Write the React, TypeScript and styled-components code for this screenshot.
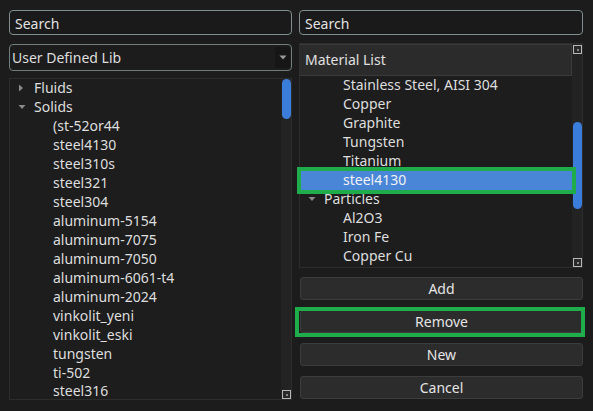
import React from "react";
import styled, { createGlobalStyle } from "styled-components";

const Global = createGlobalStyle`
  html, body { margin: 0; padding: 0; background: #1c1c1c; }
  body { font-family: "Noto Sans", "DejaVu Sans", sans-serif; color: #dedede; }
`;

const Page = styled.div`
  display: grid;
  grid-template-columns: 283px 284px;
  column-gap: 7px;
  padding: 10px 0 0 9px;
  width: 593px;
  height: 411px;
  box-sizing: border-box;
`;

const Column = styled.div`
  display: flex;
  flex-direction: column;
`;

const SearchBox = styled.div`
  height: 25px;
  box-sizing: border-box;
  border: 1.5px solid #7f8f8f;
  border-radius: 4px;
  background: #1a1a1a;
  font-size: 14px;
  line-height: 25px;
  padding-left: 5px;
  color: #e2e2e2;
`;

const Combo = styled.div`
  margin-top: 9px;
  height: 27px;
  box-sizing: border-box;
  border: 1.5px solid #6f7f7d;
  border-radius: 4px;
  background: #1c1c1c;
  display: flex;
  align-items: center;
  font-size: 14px;
  padding-left: 2px;
`;

const ComboText = styled.span`
  flex: 1;
`;

const ComboArrow = styled.div`
  width: 15px;
  align-self: stretch;
  margin: 2px 1px 2px 0;
  background: #161616;
  display: flex;
  align-items: center;
  justify-content: center;
`;

const TreeFrame = styled.div<{ $top: number; $h: number }>`
  margin-top: ${(p) => p.$top}px;
  height: ${(p) => p.$h}px;
  box-sizing: border-box;
  border: 1px solid #2d2d2d;
  background: #1d1d1d;
  display: flex;
`;

const TreeBody = styled.div`
  flex: 1;
  display: flex;
  flex-direction: column;
`;

const Header = styled.div`
  height: 32px;
  box-sizing: border-box;
  background: #2b2b2b;
  border: 1px solid #3a3a3a;
  border-left: none;
  font-size: 14px;
  line-height: 30px;
  padding-left: 5px;
  color: #e0e0e0;
`;

const Rows = styled.div`
  display: flex;
  flex-direction: column;
`;

const Row = styled.div<{ $level: number; $selected?: boolean }>`
  position: relative;
  height: 18.95px;
  line-height: 18px;
  font-size: 14px;
  display: flex;
  align-items: center;
  padding-left: ${(p) => (p.$level === 0 ? 8 : 43)}px;
  background: ${(p) => (p.$selected ? "#4a86d8" : "transparent")};
  color: ${(p) => (p.$selected ? "#f2f2f2" : "#dedede")};
  white-space: nowrap;
`;

const Twisty = styled.span`
  width: 16px;
  display: inline-flex;
  align-items: center;
`;

const Label = styled.span``;

const Scroll = styled.div`
  width: 10px;
  background: #232323;
  position: relative;
`;

const Thumb = styled.div<{ $top: number; $h: number }>`
  position: absolute;
  left: 1px;
  width: 9px;
  top: ${(p) => p.$top}px;
  height: ${(p) => p.$h}px;
  border-radius: 5px;
  background: #3b7ddb;
`;

const Corner = styled.div<{ $top?: boolean }>`
  position: absolute;
  left: 1px;
  ${(p) => (p.$top ? "top: 1px;" : "bottom: 0px;")}
  width: 9px;
  height: 9px;
  box-sizing: border-box;
  border: 1.5px solid #b8b8b8;
  background: #2a2a2a;
  display: flex;
  align-items: center;
  justify-content: center;
  &::after {
    content: "";
    width: 2px;
    height: 2px;
    background: #888;
  }
`;

const Buttons = styled.div`
  margin-top: 9px;
  display: flex;
  flex-direction: column;
  gap: 10px;
  padding-left: 1px;
`;

const Button = styled.div`
  position: relative;
  height: 23px;
  box-sizing: border-box;
  border: 1px solid #3c3c3c;
  border-radius: 3px;
  background: #2c2c2c;
  display: flex;
  align-items: center;
  justify-content: center;
  font-size: 14px;
  color: #e4e4e4;
`;

const Highlight = styled.div<{ $l: number; $r: number; $t: number; $b: number }>`
  position: absolute;
  z-index: 2;
  left: ${(p) => p.$l}px;
  right: ${(p) => p.$r}px;
  top: ${(p) => p.$t}px;
  bottom: ${(p) => p.$b}px;
  border: 4px solid #1ead4a;
  pointer-events: none;
`;

const Right = () => (
  <svg width="6" height="8" viewBox="0 0 6 8">
    <path d="M1 0.5 L5 4 L1 7.5 Z" fill="#8a8a8a" />
  </svg>
);
const Down = () => (
  <svg width="8" height="6" viewBox="0 0 8 6">
    <path d="M0.5 1 L7.5 1 L4 5 Z" fill="#8a8a8a" />
  </svg>
);

const leftItems = [
  "(st-52or44",
  "steel4130",
  "steel310s",
  "steel321",
  "steel304",
  "aluminum-5154",
  "aluminum-7075",
  "aluminum-7050",
  "aluminum-6061-t4",
  "aluminum-2024",
  "vinkolit_yeni",
  "vinkolit_eski",
  "tungsten",
  "ti-502",
  "steel316",
];

const rightTop = ["Stainless Steel, AISI 304", "Copper", "Graphite", "Tungsten", "Titanium"];
const particles = ["Al2O3", "Iron Fe", "Copper Cu"];

export default function App() {
  return (
    <>
      <Global />
      <Page>
        <Column>
          <SearchBox>Search</SearchBox>
          <Combo>
            <ComboText>User Defined Lib</ComboText>
            <ComboArrow>
              <svg width="8" height="5" viewBox="0 0 8 5">
                <path d="M0.5 0.5 L7.5 0.5 L4 4.5 Z" fill="#9a9a9a" />
              </svg>
            </ComboArrow>
          </Combo>
          <TreeFrame $top={7} $h={322}>
            <TreeBody>
              <Rows>
                <Row $level={0}>
                  <Twisty>
                    <Right />
                  </Twisty>
                  <Label>Fluids</Label>
                </Row>
                <Row $level={0}>
                  <Twisty>
                    <Down />
                  </Twisty>
                  <Label>Solids</Label>
                </Row>
                {leftItems.map((t) => (
                  <Row key={t} $level={1}>
                    <Label>{t}</Label>
                  </Row>
                ))}
              </Rows>
            </TreeBody>
            <Scroll>
              <Thumb $top={0} $h={40} />
              <Corner />
            </Scroll>
          </TreeFrame>
        </Column>
        <Column>
          <SearchBox>Search</SearchBox>
          <TreeFrame $top={8} $h={225}>
            <TreeBody>
              <Header>Material List</Header>
              <Rows>
                {rightTop.map((t) => (
                  <Row key={t} $level={1}>
                    <Label>{t}</Label>
                  </Row>
                ))}
                <Row $level={1} $selected>
                  <Label>steel4130</Label>
                  <Highlight $l={-3} $r={-4} $t={-4} $b={-4} />
                </Row>
                <Row $level={0}>
                  <Twisty>
                    <Down />
                  </Twisty>
                  <Label>Particles</Label>
                </Row>
                {particles.map((t) => (
                  <Row key={t} $level={1}>
                    <Label>{t}</Label>
                  </Row>
                ))}
              </Rows>
            </TreeBody>
            <Scroll>
              <Corner $top />
              <Thumb $top={78} $h={87} />
              <Corner />
            </Scroll>
          </TreeFrame>
          <Buttons>
            <Button>Add</Button>
            <Button>
              Remove
              <Highlight $l={-6} $r={-3} $t={-4} $b={-5} />
            </Button>
            <Button>New</Button>
            <Button>Cancel</Button>
          </Buttons>
        </Column>
      </Page>
    </>
  );
}
